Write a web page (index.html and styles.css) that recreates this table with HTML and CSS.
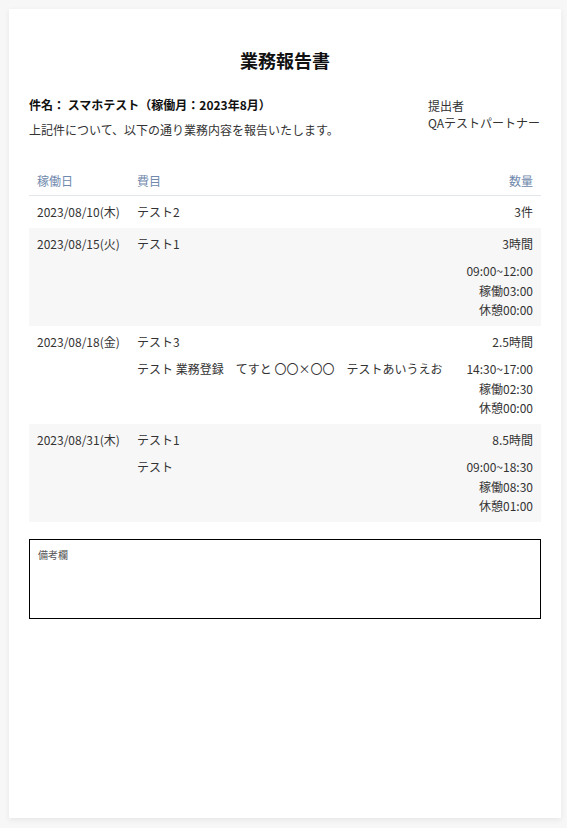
FILE: index.html
```html
<!DOCTYPE html>
<html>
<head>
    <title>業務報告書</title>
    <link rel="stylesheet" href="styles.css">
</head>
<body>
    <div class="sheet">
        <h1 class="title">業務報告書</h1>

        <div class="summary">
            <div class="subject">
                <p class="subject-name">件名： スマホテスト（稼働月：2023年8月）</p>
                <p class="subject-lead">上記件について、以下の通り業務内容を報告いたします。</p>
            </div>
            <div class="submitter">
                <div>提出者</div>
                <div>QAテストパートナー</div>
            </div>
        </div>

        <div class="report">
            <div class="report-head">
                <div>稼働日</div>
                <div>費目</div>
                <div class="qty">数量</div>
            </div>

            <div class="record">
                <div class="line">
                    <div>2023/08/10(木)</div>
                    <div>テスト2</div>
                    <div class="qty">3件</div>
                </div>
            </div>

            <div class="record odd">
                <div class="line">
                    <div>2023/08/15(火)</div>
                    <div>テスト1</div>
                    <div class="qty">3時間</div>
                </div>
                <div class="detail">
                    <div></div>
                    <div class="memo"></div>
                    <div class="qty">
                        <div>09:00~12:00</div>
                        <div>稼働03:00</div>
                        <div>休憩00:00</div>
                    </div>
                </div>
            </div>

            <div class="record">
                <div class="line">
                    <div>2023/08/18(金)</div>
                    <div>テスト3</div>
                    <div class="qty">2.5時間</div>
                </div>
                <div class="detail">
                    <div></div>
                    <div class="memo">テスト 業務登録　てすと 〇〇×〇〇　テストあいうえお</div>
                    <div class="qty">
                        <div>14:30~17:00</div>
                        <div>稼働02:30</div>
                        <div>休憩00:00</div>
                    </div>
                </div>
            </div>

            <div class="record odd">
                <div class="line">
                    <div>2023/08/31(木)</div>
                    <div>テスト1</div>
                    <div class="qty">8.5時間</div>
                </div>
                <div class="detail">
                    <div></div>
                    <div class="memo">テスト</div>
                    <div class="qty">
                        <div>09:00~18:30</div>
                        <div>稼働08:30</div>
                        <div>休憩01:00</div>
                    </div>
                </div>
            </div>
        </div>

        <div class="remarks">
            <div class="remarks-label">備考欄</div>
        </div>
    </div>
</body>
</html>
```

FILE: styles.css
```css
body {
    margin: 0;
    padding: 9px 0 10px 9px;
    background: #f7f7f7;
    font-family: "Noto Sans CJK JP", "Noto Sans", sans-serif;
    font-size: 12px;
    color: #333;
}
.sheet {
    width: 552px;
    height: 809px;
    box-sizing: border-box;
    padding: 20px;
    background: white;
    box-shadow: 0 2px 6px rgba(0, 0, 0, 0.07);
}
.title {
    margin: 18px 0 0;
    font-size: 18px;
    line-height: 27px;
    text-align: center;
    color: #111;
}
.summary {
    display: flex;
    justify-content: space-between;
    margin-top: 22px;
}
.subject p {
    margin: 0;
    line-height: 18px;
}
.subject-name {
    font-weight: bold;
    color: #111;
}
.subject .subject-lead {
    margin-top: 7px;
}
.submitter {
    width: 113px;
    line-height: 17px;
    padding-top: 1px;
}
.report {
    margin-top: 26px;
}
.report-head,
.line,
.detail {
    display: grid;
    grid-template-columns: 100px 1fr auto;
    padding: 0 8px;
}
.report-head {
    height: 30px;
    align-items: center;
    color: #7089ad;
    border-bottom: 1px solid #e3e6ea;
}
.qty {
    text-align: right;
}
.line {
    padding-top: 7px;
    padding-bottom: 7px;
    line-height: 18px;
}
.detail {
    margin-top: 1px;
    padding-bottom: 6.5px;
    line-height: 19.5px;
}
.memo {
    white-space: nowrap;
}
.odd {
    background: #f7f7f7;
}
.remarks {
    margin-top: 17px;
    height: 80px;
    box-sizing: border-box;
    border: 1px solid #000;
    padding: 9px 8px;
}
.remarks-label {
    font-size: 10px;
    line-height: 12px;
    color: #555;
}
```
